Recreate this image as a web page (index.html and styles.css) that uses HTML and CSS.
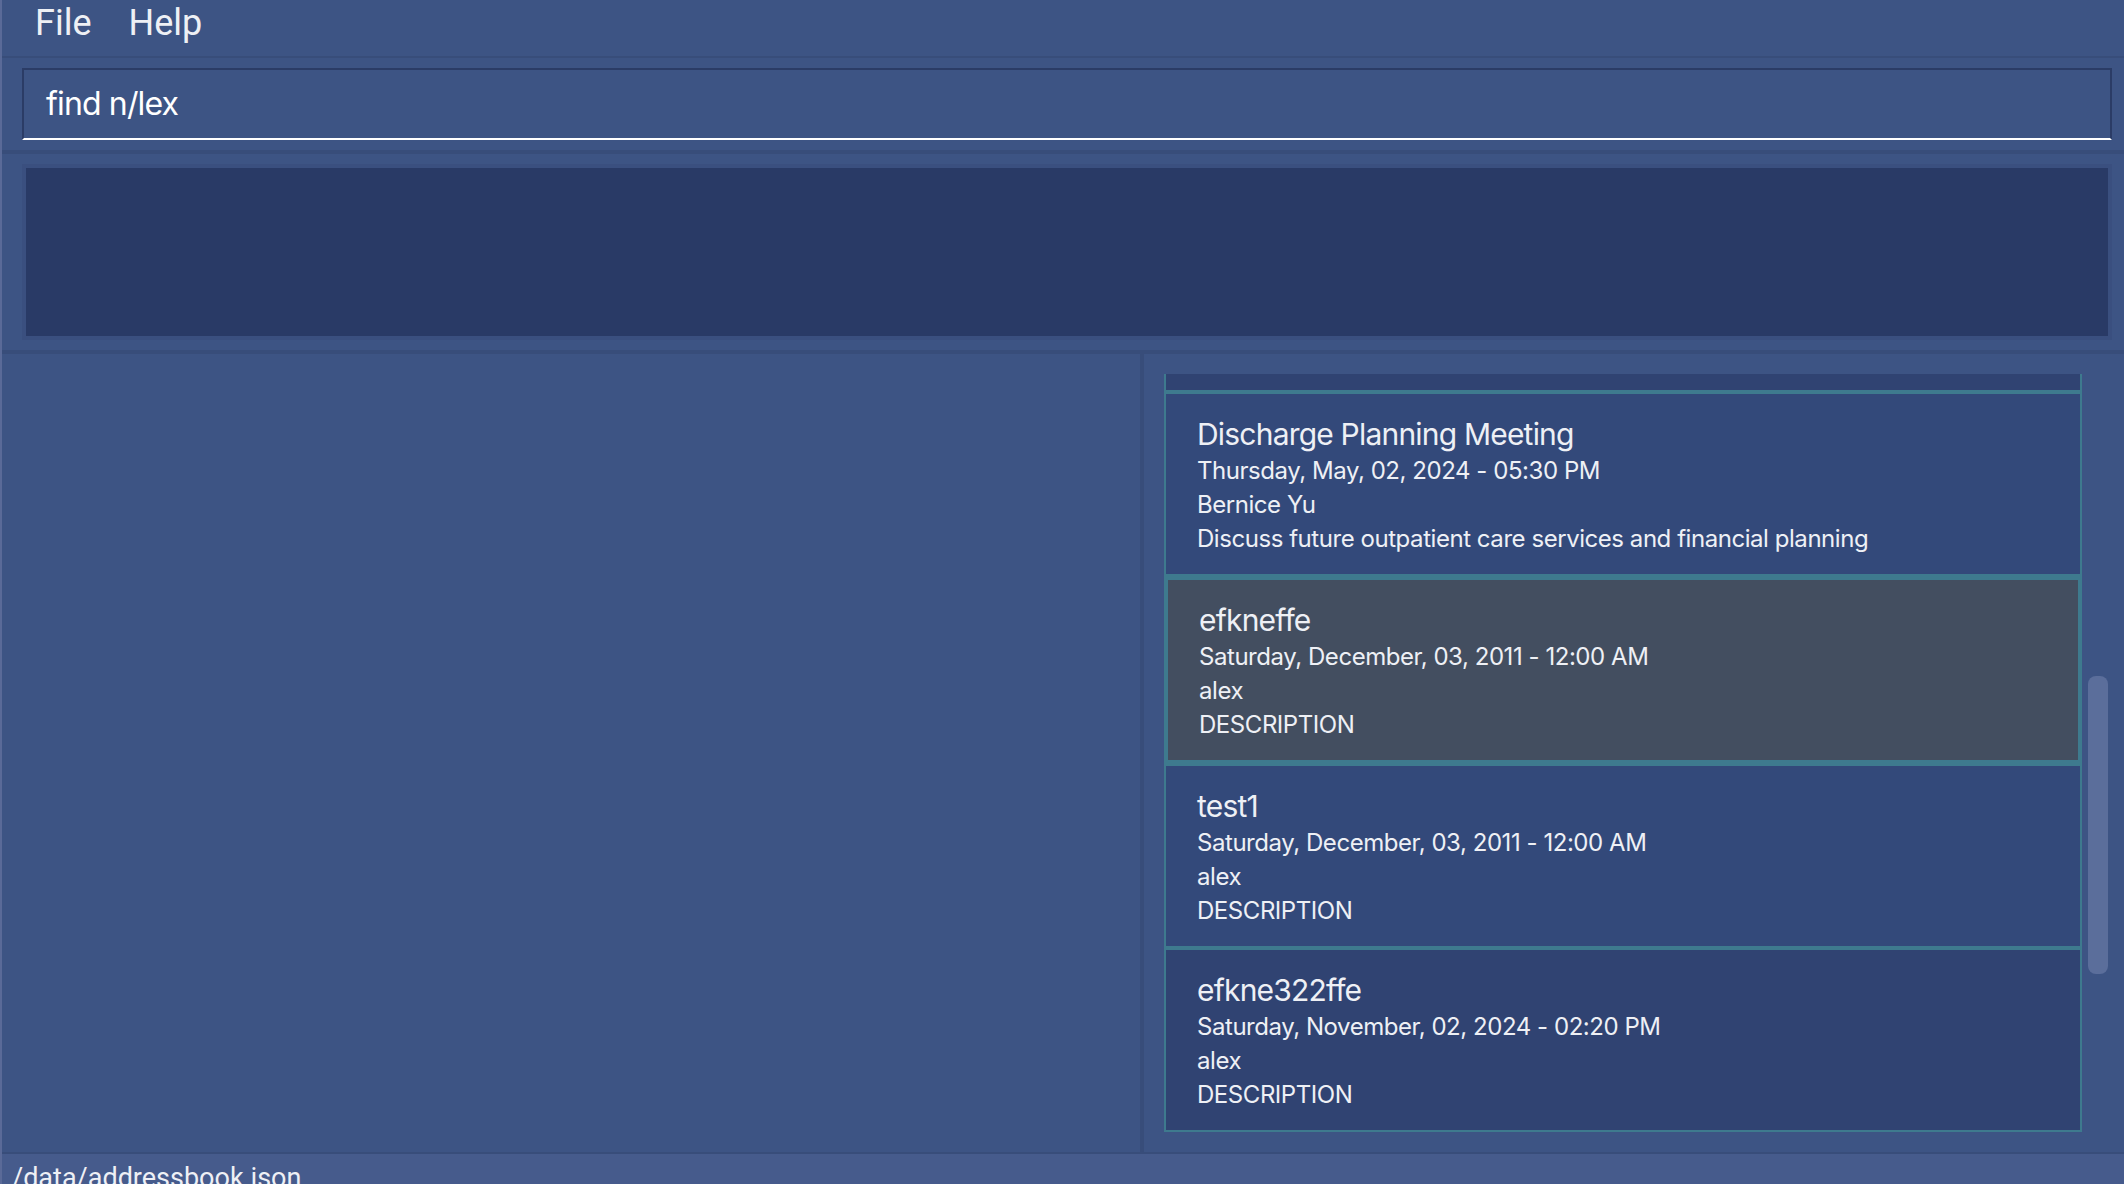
FILE: index.html
```html
<!DOCTYPE html>
<html lang="en">
<head>
<meta charset="utf-8">
<title>Address Book</title>
<link rel="stylesheet" href="styles.css">
</head>
<body>
<div class="app">
  <div class="menubar">
    <span class="menu-item">File</span>
    <span class="menu-item">Help</span>
  </div>
  <div class="cmd-section">
    <div class="cmd-box">find n/lex</div>
  </div>
  <div class="result-section">
    <div class="result-box"><div class="result-inner"></div></div>
  </div>
  <div class="main">
    <div class="left-pane"></div>
    <div class="right-pane">
      <div class="list">
        <div class="cell even partial"></div>
        <div class="cell odd">
          <div class="title">Discharge Planning Meeting</div>
          <div class="line">Thursday, May, 02, 2024 - 05:30 PM</div>
          <div class="line">Bernice Yu</div>
          <div class="line">Discuss future outpatient care services and financial planning</div>
        </div>
        <div class="cell even selected">
          <div class="title">efkneffe</div>
          <div class="line">Saturday, December, 03, 2011 - 12:00 AM</div>
          <div class="line">alex</div>
          <div class="line">DESCRIPTION</div>
        </div>
        <div class="cell odd">
          <div class="title">test1</div>
          <div class="line">Saturday, December, 03, 2011 - 12:00 AM</div>
          <div class="line">alex</div>
          <div class="line">DESCRIPTION</div>
        </div>
        <div class="cell even">
          <div class="title">efkne322ffe</div>
          <div class="line">Saturday, November, 02, 2024 - 02:20 PM</div>
          <div class="line">alex</div>
          <div class="line">DESCRIPTION</div>
        </div>
      </div>
      <div class="scrollbar"><div class="thumb"></div></div>
    </div>
  </div>
  <div class="status">/data/addressbook.json</div>
</div>
</body>
</html>
```
FILE: styles.css
```css
* { box-sizing: border-box; }
html, body { margin: 0; padding: 0; }
body {
  background: #3d5484;
  font-family: Inter, Roboto, "Liberation Sans", sans-serif;
  color: #eef0f5;
}
.app {
  width: 2124px;
  height: 1184px;
  display: flex;
  flex-direction: column;
  background: #3d5484;
  border-left: 2px solid #5a6a98;
  overflow: hidden;
}
.menubar {
  height: 58px;
  padding: 2px 0 0 33px;
  border-bottom: 2px solid #384d7a;
  display: flex;
  gap: 37px;
  font-family: Roboto, "Liberation Sans", sans-serif;
  font-size: 36px;
  line-height: 42px;
  flex: none;
}
.cmd-section {
  padding: 10px 12px 10px 20px;
  border-bottom: 4px solid #384d7a;
  flex: none;
}
.cmd-box {
  height: 72px;
  border: 2px solid #2b3c66;
  border-bottom: 2px solid #ffffff;
  padding: 1px 0 0 22px;
  font-size: 32px;
  letter-spacing: -0.85px;
  line-height: 66px;
  color: #ffffff;
}
.result-section {
  padding: 10px 12px 10px 20px;
  border-bottom: 4px solid #384d7a;
  flex: none;
}
.result-box {
  height: 176px;
  border: 4px solid #3a4f7f;
}
.result-inner {
  height: 100%;
  background: #293a66;
}
.main {
  height: 798px;
  display: flex;
  flex: none;
}
.left-pane {
  width: 1142px;
  border-right: 4px solid #384d7a;
  flex: none;
}
.right-pane {
  flex: 1;
  display: flex;
  padding: 20px 0 20px 20px;
}
.list {
  width: 918px;
  height: 758px;
  overflow: hidden;
  flex: none;
}
.cell {
  height: 184px;
  border: 2px solid #3e7a8e;
  padding: 20px 0 0 31px;
  overflow: hidden;
}
.cell.odd { background: #33497a; }
.cell.even { background: #304372; }
.cell.partial {
  height: 18px;
  border-top: 0;
  padding: 0;
}
.cell.selected {
  height: 188px;
  border-width: 4px;
  background: #434e60;
}
.title {
  font-size: 30px;
  letter-spacing: -0.8px;
  line-height: 40px;
  white-space: nowrap;
}
.line {
  font-size: 24px;
  letter-spacing: -0.45px;
  line-height: 34px;
  white-space: nowrap;
}
.scrollbar {
  width: 42px;
  padding: 302px 0 0 6px;
  flex: none;
}
.thumb {
  width: 20px;
  height: 298px;
  border-radius: 8px;
  background: #5b6e9b;
}
.status {
  flex: 1;
  border-top: 2px solid #384d7a;
  background: #465b8c;
  padding: 8px 0 0 10px;
  font-family: Roboto, "Liberation Sans", sans-serif;
  font-size: 27px;
  line-height: 32px;
  overflow: hidden;
  white-space: nowrap;
}
```
